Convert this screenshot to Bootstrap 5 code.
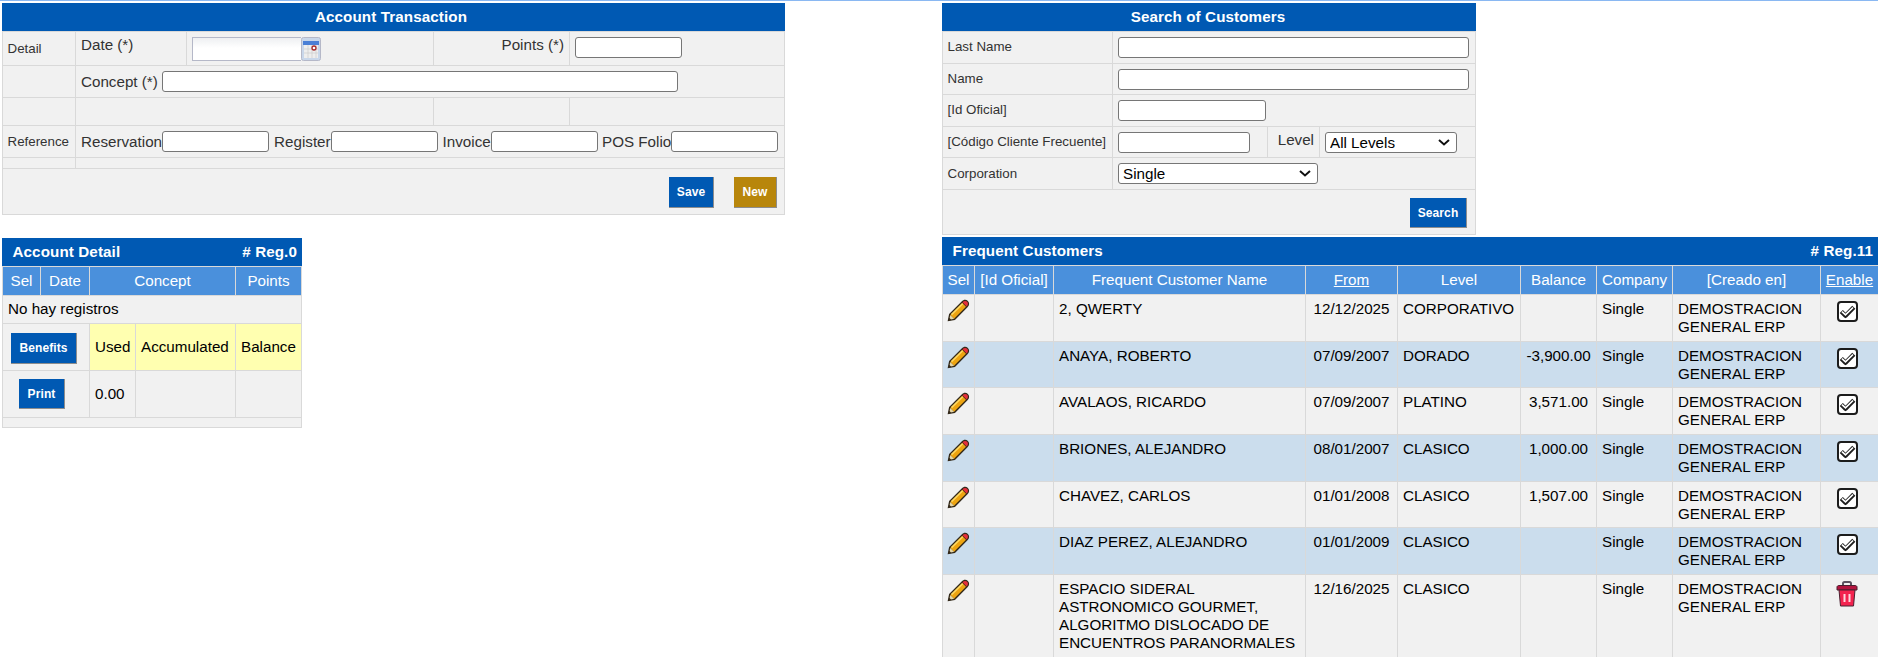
<!DOCTYPE html>
<html lang="en">
<head>
<meta charset="utf-8">
<title>Frequent Customers</title>
<link href="https://cdn.jsdelivr.net/npm/bootstrap@5.3.0/dist/css/bootstrap.min.css" rel="stylesheet">
<style>
html,body{height:657px;overflow:hidden;background:#fff}
body{font-family:"Liberation Sans",Arial,sans-serif;font-size:15.2px;line-height:18px;color:#000}
.page-shell{border-top:1px solid #8ab8f2;padding:2px 0 0 2px;display:grid;grid-template-columns:940px 936px;height:657px;overflow:hidden}
.title-bar{background:#0059b3;color:#fff;font-weight:700;height:28px;line-height:28px;font-size:15.2px;letter-spacing:.1px;padding:0 5px 0 10.5px}
.title-bar.centered{text-align:center;padding:0 5px 0 0}
.title-bar.centered.nudge{padding:0 2px 0 0}
.grid-tb{border-collapse:collapse;table-layout:fixed;background:#f1f1f1}
.grid-tb td,.grid-tb th{border:1px solid #d9d9d9;padding:5px;vertical-align:top;font-weight:400}
.grid-tb th{background:#4a90dc;color:#fff;text-align:center;height:29px;padding:5px 0;white-space:nowrap}
.grid-tb th a{color:#fff;text-decoration:underline}
.form-lbl{color:#333;white-space:nowrap}
.grid-tb td.top-lbl{padding-top:4px}
.grid-tb td.mini-lbl{font-size:13.33px;color:#333;vertical-align:middle;white-space:nowrap;padding-left:4.5px}
.plain-in{height:21px;border:1px solid #767676;border-radius:3px;background:#fff;padding:0 3px;font-size:14px;display:block;flex:none;width:107px}
.plain-sel{appearance:none;height:21px;border:1px solid #767676;border-radius:3px;padding:0 0 0 4px;font:15.2px "Liberation Sans",Arial,sans-serif;color:#000;display:block;background:#fff url("data:image/svg+xml,%3Csvg xmlns='http://www.w3.org/2000/svg' width='12' height='7'%3E%3Cpath d='M1 1l5 4.500 5-4.500' fill='none' stroke='%23111' stroke-width='2'/%3E%3C/svg%3E") no-repeat right 6px center}
.date-wrap{display:flex;height:24px}
.date-in{width:109px;height:24px;border:1px solid #b5b8c8;border-right:0;background:linear-gradient(#eef0f2,#fff 45%);display:block}
.cal-btn{display:block;width:20px;height:24px}
.act-btn{--bs-btn-padding-x:0;--bs-btn-padding-y:0;--bs-btn-font-size:12px;--bs-btn-font-weight:700;--bs-btn-color:#fff;--bs-btn-bg:#0059b3;--bs-btn-border-radius:0;border:0;border-right:1px solid #8d8d8d;border-bottom:1px solid #8d8d8d;height:31px;line-height:30px;display:block;background:#0059b3;color:#fff;font-family:"Liberation Sans",Arial,sans-serif;letter-spacing:.1px}
.act-btn.gold{background:#b8860b}
.stripe td{background:#cbdded}
.grid-tb .warn-cell{background:#ffffb0}
.mid-cell td{vertical-align:middle}
.ctr{text-align:center}
.tiny-row td{height:11px;padding:0!important}
.spacer-cell{height:28px;padding-top:0!important;padding-bottom:0!important}
.mt-detail{margin-top:23px}

#tx-wrap{width:783px}
#tx-table{width:782px}
#tx-table col:nth-child(1){width:73px}
#tx-table col:nth-child(2){width:111px}
#tx-table col:nth-child(3){width:247px}
#tx-table col:nth-child(4){width:136px}
#tx-table col:nth-child(5){width:215px}
#tx-table .top-row td{padding-bottom:4px}
.in-concept{width:516px}
.lbl-a{margin-left:5px;min-width:57px}
.lbl-b{margin-left:5px;min-width:48.500px}
.lbl-c{margin-left:4px}
.in-reg{width:106.500px}
.concept-gap{gap:4px}
.grid-tb td.tx-cell{padding:8px 7px 6px 5px}
.tx-btns{gap:20px}
.save-w{width:45px}
.new-w{width:43px}

#acc-wrap{width:300px}
#acc-table{width:299px}
#acc-table col:nth-child(1){width:38px}
#acc-table col:nth-child(2){width:49px}
#acc-table col:nth-child(3){width:46px}
#acc-table col:nth-child(4){width:100px}
#acc-table col:nth-child(5){width:66px}
#acc-table .none-row td{padding:4px 5px 5px}
#acc-table .tiny-row td{height:10px}
.grid-tb td.ben-cell{padding:9px 5px 6px 8px}
.grid-tb td.print-cell{padding:8px 5px 8px 16px}
.ben-w{width:66px}
.print-w{width:46px;height:30px}

#srch-wrap{width:534px}
#srch-table{width:533px}
#srch-table col:nth-child(1){width:170px}
#srch-table col:nth-child(2){width:155px}
#srch-table col:nth-child(3){width:52px}
#srch-table col:nth-child(4){width:156px}
#srch-table .sr td{padding-bottom:4.6px}
#srch-table .sr td.mini-lbl{padding-bottom:5.200px}
.in-wide{width:351px}
.in-id{width:148px}
.in-code{width:132px}
.sel-lvl{width:132px}
.sel-corp{width:200px}
.grid-tb td.srch-cell{padding:8px 8px 6px 5px}
.srch-w{width:57px;height:30px}

#cust-wrap{width:936px;margin-top:2px}
#cust-table{width:936px}
#cust-table col:nth-child(1){width:32px}
#cust-table col:nth-child(2){width:79px}
#cust-table col:nth-child(3){width:252px}
#cust-table col:nth-child(4){width:92px}
#cust-table col:nth-child(5){width:123px}
#cust-table col:nth-child(6){width:76px}
#cust-table col:nth-child(7){width:76px}
#cust-table col:nth-child(8){width:148px}
#cust-table col:nth-child(9){width:58px}
#cust-table td{padding-bottom:4.67px}
#cust-table td.pen-cell{padding:4px}
#cust-table td.en-cell{padding:6px 10px 0 5px}
.ico-pen{display:block;width:23px;height:23px}
.ico-chk{display:block;width:21px;height:21px;margin:0 auto}
.ico-del{display:block;width:22px;height:26px;margin:0 auto}
</style>
</head>
<body>
<svg width="0" height="0" class="position-absolute">
  <defs>
    <symbol id="ic-pencil" viewBox="0 0 22 22">
      <path d="M.6 21.400 L2 14.400 L14 2.400 C16 .4 18.300 .3 20 2 C21.700 3.700 21.600 6 19.600 8 L7.600 20 Z" fill="#33291a"/>
      <path d="M3.200 15.200 L14.600 3.800 L18.200 7.400 L6.800 18.800 Z" fill="#eda411"/>
      <path d="M4.300 15 L15 4.400" stroke="#ffd860" stroke-width="1.500"/>
      <path d="M14.800 3.200 C16.300 1.700 18 1.600 19.300 2.700 C20.400 4 20.300 5.700 18.800 7.200 Z" fill="#e5303a"/>
      <path d="M2 20 L3.200 15.200 L6.800 18.800 Z" fill="#e7d6a4"/>
      <path d="M1.200 20.800 L2 17.800 L4.200 20 Z" fill="#33291a"/>
    </symbol>
    <symbol id="ic-check" viewBox="0 0 21 21">
      <rect x="1" y="1" width="19" height="19" rx="3" fill="#fff" stroke="#1c1c1c" stroke-width="2"/>
      <path d="M4.300 10.500 L8.500 14.800 L16.800 6.200" fill="none" stroke="#1f1f1f" stroke-width="4.400" stroke-linejoin="round"/>
      <path d="M5 10.600 L8.500 13.800 L16 6.500" fill="none" stroke="#fff" stroke-width="1.700"/>
    </symbol>
    <symbol id="ic-trash" viewBox="0 0 22 26">
      <path d="M7 5 V2.500 C7 1.500 7.700 1 8.500 1 H13.500 C14.300 1 15 1.500 15 2.500 V5" fill="none" stroke="#5b5360" stroke-width="2"/>
      <path d="M1 6 C1 5 2 4.500 3 4.500 H19 C20 4.500 21 5 21 6 V9 H1 Z" fill="#b3143f" stroke="#4a2030" stroke-width="1"/>
      <path d="M3 9 H19 L17.500 25 H4.500 Z" fill="#f3234f" stroke="#4a2030" stroke-width="1"/>
      <path d="M8.500 13 V21 M13.500 13 V21" stroke="#ffd5dd" stroke-width="2"/>
    </symbol>
    <symbol id="ic-cal" viewBox="0 0 20 24">
      <rect x=".5" y=".5" width="19" height="23" rx="2" fill="#c9d7ea" stroke="#b5b8c8"/>
      <rect x="2" y="4" width="16" height="4" fill="#4a7fd6"/>
      <rect x="3" y="8" width="14" height="13" fill="#eee"/>
      <path d="M3 12 H17 M3 16 H17 M7 8 V21 M11 8 V21 M15 8 V21" stroke="#cfcfcf" stroke-width=".8"/>
      <circle cx="13" cy="11" r="2" fill="#fff" stroke="#a52a2a" stroke-width="1.300"/>
    </symbol>
  </defs>
</svg>

<div class="page-shell">
  <div class="d-flex flex-column">
    <div id="tx-wrap">
      <div class="title-bar centered">Account Transaction</div>
      <table class="grid-tb" id="tx-table">
        <colgroup><col><col><col><col><col></colgroup>
        <tr class="top-row">
          <td class="mini-lbl">Detail</td>
          <td class="form-lbl top-lbl">Date (*)</td>
          <td><div class="date-wrap"><span class="date-in"></span><svg class="cal-btn"><use href="#ic-cal"/></svg></div></td>
          <td class="form-lbl top-lbl text-end">Points (*)</td>
          <td><input class="plain-in" type="text"></td>
        </tr>
        <tr>
          <td></td>
          <td colspan="4"><div class="d-flex align-items-center form-lbl concept-gap"><span>Concept (*)</span><input class="plain-in in-concept" type="text"></div></td>
        </tr>
        <tr><td class="spacer-cell"></td><td colspan="2"></td><td></td><td></td></tr>
        <tr>
          <td class="mini-lbl">Reference</td>
          <td colspan="4"><div class="d-flex align-items-center form-lbl">
            <span>Reservation</span><input class="plain-in" type="text">
            <span class="lbl-a">Register</span><input class="plain-in in-reg" type="text">
            <span class="lbl-b">Invoice</span><input class="plain-in" type="text">
            <span class="lbl-c">POS Folio</span><input class="plain-in" type="text">
          </div></td>
        </tr>
        <tr class="tiny-row"><td></td><td colspan="4"></td></tr>
        <tr><td colspan="5" class="tx-cell"><div class="d-flex justify-content-end tx-btns"><button class="btn act-btn save-w" type="button">Save</button><button class="btn act-btn gold new-w" type="button">New</button></div></td></tr>
      </table>
    </div>

    <div class="mt-detail" id="acc-wrap">
      <div class="title-bar d-flex justify-content-between"><span>Account Detail</span><span># Reg.0</span></div>
      <table class="grid-tb" id="acc-table">
        <colgroup><col><col><col><col><col></colgroup>
        <tr><th>Sel</th><th>Date</th><th colspan="2">Concept</th><th>Points</th></tr>
        <tr class="none-row"><td colspan="5">No hay registros</td></tr>
        <tr class="mid-cell">
          <td colspan="2" class="ben-cell"><button class="btn act-btn ben-w" type="button">Benefits</button></td>
          <td class="warn-cell">Used</td><td class="warn-cell">Accumulated</td><td class="warn-cell">Balance</td>
        </tr>
        <tr class="mid-cell">
          <td colspan="2" class="print-cell"><button class="btn act-btn print-w" type="button">Print</button></td>
          <td>0.00</td><td></td><td></td>
        </tr>
        <tr class="tiny-row"><td colspan="5"></td></tr>
      </table>
    </div>
  </div>

  <div class="d-flex flex-column">
    <div id="srch-wrap">
      <div class="title-bar centered nudge">Search of Customers</div>
      <table class="grid-tb" id="srch-table">
        <colgroup><col><col><col><col></colgroup>
        <tr class="sr"><td class="mini-lbl">Last Name</td><td colspan="3"><input class="plain-in in-wide" type="text"></td></tr>
        <tr class="sr"><td class="mini-lbl">Name</td><td colspan="3"><input class="plain-in in-wide" type="text"></td></tr>
        <tr class="sr"><td class="mini-lbl">[Id Oficial]</td><td colspan="3"><input class="plain-in in-id" type="text"></td></tr>
        <tr class="sr"><td class="mini-lbl">[Código Cliente Frecuente]</td><td><input class="plain-in in-code" type="text"></td><td class="form-lbl top-lbl text-end">Level</td><td><select class="plain-sel sel-lvl"><option>All Levels</option></select></td></tr>
        <tr class="sr"><td class="mini-lbl">Corporation</td><td colspan="3"><select class="plain-sel sel-corp"><option>Single</option></select></td></tr>
        <tr><td colspan="4" class="srch-cell"><div class="d-flex justify-content-end"><button class="btn act-btn srch-w" type="button">Search</button></div></td></tr>
      </table>
    </div>

    <div id="cust-wrap">
      <div class="title-bar d-flex justify-content-between"><span>Frequent Customers</span><span># Reg.11</span></div>
      <table class="grid-tb" id="cust-table">
        <colgroup><col><col><col><col><col><col><col><col><col></colgroup>
        <tr><th>Sel</th><th>[Id Oficial]</th><th>Frequent Customer Name</th><th><a href="#">From</a></th><th>Level</th><th>Balance</th><th>Company</th><th>[Creado en]</th><th><a href="#">Enable</a></th></tr>
        <tr>
          <td class="pen-cell"><svg class="ico-pen"><use href="#ic-pencil"/></svg></td><td></td><td>2, QWERTY</td><td class="ctr">12/12/2025</td><td>CORPORATIVO</td><td class="ctr"></td><td>Single</td><td>DEMOSTRACION GENERAL ERP</td><td class="en-cell"><svg class="ico-chk"><use href="#ic-check"/></svg></td>
        </tr>
        <tr class="stripe">
          <td class="pen-cell"><svg class="ico-pen"><use href="#ic-pencil"/></svg></td><td></td><td>ANAYA, ROBERTO</td><td class="ctr">07/09/2007</td><td>DORADO</td><td class="ctr">-3,900.00</td><td>Single</td><td>DEMOSTRACION GENERAL ERP</td><td class="en-cell"><svg class="ico-chk"><use href="#ic-check"/></svg></td>
        </tr>
        <tr>
          <td class="pen-cell"><svg class="ico-pen"><use href="#ic-pencil"/></svg></td><td></td><td>AVALAOS, RICARDO</td><td class="ctr">07/09/2007</td><td>PLATINO</td><td class="ctr">3,571.00</td><td>Single</td><td>DEMOSTRACION GENERAL ERP</td><td class="en-cell"><svg class="ico-chk"><use href="#ic-check"/></svg></td>
        </tr>
        <tr class="stripe">
          <td class="pen-cell"><svg class="ico-pen"><use href="#ic-pencil"/></svg></td><td></td><td>BRIONES, ALEJANDRO</td><td class="ctr">08/01/2007</td><td>CLASICO</td><td class="ctr">1,000.00</td><td>Single</td><td>DEMOSTRACION GENERAL ERP</td><td class="en-cell"><svg class="ico-chk"><use href="#ic-check"/></svg></td>
        </tr>
        <tr>
          <td class="pen-cell"><svg class="ico-pen"><use href="#ic-pencil"/></svg></td><td></td><td>CHAVEZ, CARLOS</td><td class="ctr">01/01/2008</td><td>CLASICO</td><td class="ctr">1,507.00</td><td>Single</td><td>DEMOSTRACION GENERAL ERP</td><td class="en-cell"><svg class="ico-chk"><use href="#ic-check"/></svg></td>
        </tr>
        <tr class="stripe">
          <td class="pen-cell"><svg class="ico-pen"><use href="#ic-pencil"/></svg></td><td></td><td>DIAZ PEREZ, ALEJANDRO</td><td class="ctr">01/01/2009</td><td>CLASICO</td><td class="ctr"></td><td>Single</td><td>DEMOSTRACION GENERAL ERP</td><td class="en-cell"><svg class="ico-chk"><use href="#ic-check"/></svg></td>
        </tr>
        <tr>
          <td class="pen-cell"><svg class="ico-pen"><use href="#ic-pencil"/></svg></td><td></td><td>ESPACIO SIDERAL ASTRONOMICO GOURMET, ALGORITMO DISLOCADO DE ENCUENTROS PARANORMALES</td><td class="ctr">12/16/2025</td><td>CLASICO</td><td class="ctr"></td><td>Single</td><td>DEMOSTRACION GENERAL ERP</td><td class="en-cell"><svg class="ico-del"><use href="#ic-trash"/></svg></td>
        </tr>
      </table>
    </div>
  </div>
</div>
<script src="https://cdn.jsdelivr.net/npm/bootstrap@5.3.0/dist/js/bootstrap.bundle.min.js"></script>
</body>
</html>
